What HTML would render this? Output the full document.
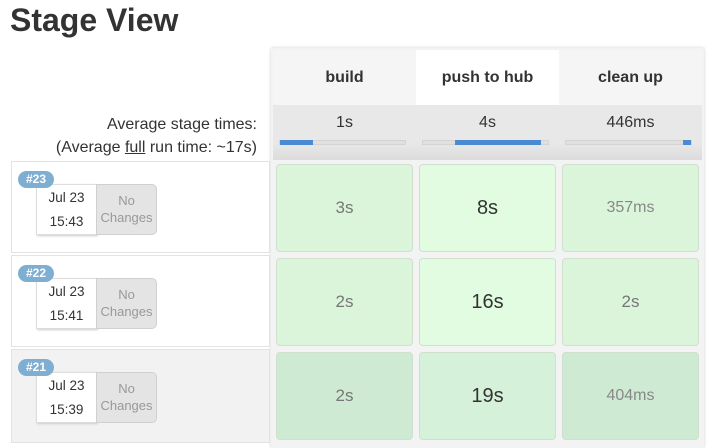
<!DOCTYPE html><html><head><style>
*{margin:0;padding:0;box-sizing:border-box}
body{width:716px;height:443px;background:#fff;font-family:"Liberation Sans",sans-serif;color:#333;position:relative;overflow:hidden}
.a{position:absolute}
h1{position:absolute;left:10px;top:2px;font-size:32px;font-weight:bold;color:#333}
.hd{top:50px;height:55px;width:143px;background:#f5f5f5;text-align:center;line-height:55px;font-weight:bold;font-size:16px}
.av{top:105px;height:55px;width:143px;background:linear-gradient(#e8e8e8 70%,#dcdcdc);text-align:center;font-size:16px;padding-top:9px}
.bar{position:absolute;top:35px;left:6px;right:10px;height:5px;background:#e0e0e0;border:1px solid #d4d4d4}
.bar i{position:absolute;top:-1px;height:5px;background:#4a8ad0}
.c{width:137px;height:88px;border:1px solid #cfe0cf;border-radius:4px;text-align:center;line-height:86px;font-size:17px;color:#777}
.rl{left:11px;width:259px;height:92px;border:1px solid #e3e3e3;background:#fff}
.badge{left:18px;width:36px;height:17px;background:#7eaed1;color:#fff;border-radius:9px;font-size:12px;font-weight:bold;text-align:center;line-height:17px}
.dt{left:36px;width:61px;height:51px;background:#fff;border:1px solid #ddd;box-shadow:1px 1px 2px #ccc;font-size:13.5px;text-align:center;line-height:24px;padding-top:1px}
.nc{left:96px;width:61px;height:51px;background:#e4e4e4;border:1px solid #d0d0d0;border-radius:0 5px 5px 0;color:#999;font-size:13px;text-align:center;line-height:17px;padding-top:7px}
</style></head><body>
<h1>Stage View</h1>
<div class="a" style="left:271px;top:48px;width:433px;height:400px;background:#f3f3f3;box-shadow:0 0 3px #ccc"></div>
<div class="a hd" style="left:273px">build</div>
<div class="a hd" style="left:416px;background:#fff">push to hub</div>
<div class="a hd" style="left:559px">clean up</div>
<div class="a av" style="left:273px">1s<div class="bar"><i style="left:0;width:33px"></i></div></div>
<div class="a av" style="left:416px">4s<div class="bar"><i style="left:32px;width:86px"></i></div></div>
<div class="a av" style="left:559px">446ms<div class="bar"><i style="left:117px;width:8px"></i></div></div>
<div class="a" style="right:459px;top:113px;text-align:right;font-size:16px;line-height:23px;width:270px">Average stage times:<br>(Average <u>full</u> run time: ~17s)</div>

<div class="a rl" style="top:161px"></div>
<div class="a rl" style="top:255px"></div>
<div class="a rl" style="top:349px;background:#f2f2f2;height:94px"></div>

<div class="a dt" style="top:184px">Jul 23<br>15:43</div><div class="a nc" style="top:184px">No<br>Changes</div><div class="a badge" style="top:171px">#23</div>
<div class="a dt" style="top:278px">Jul 23<br>15:41</div><div class="a nc" style="top:278px">No<br>Changes</div><div class="a badge" style="top:265px">#22</div>
<div class="a dt" style="top:372px">Jul 23<br>15:39</div><div class="a nc" style="top:372px">No<br>Changes</div><div class="a badge" style="top:359px">#21</div>

<div class="a c" style="left:276px;top:164px;background:#daf5da">3s</div>
<div class="a c" style="left:419px;top:164px;background:#e1fce1;color:#333;font-size:20px">8s</div>
<div class="a c" style="left:562px;top:164px;background:#daf5da;font-size:16px;color:#888">357ms</div>
<div class="a c" style="left:276px;top:258px;background:#daf5da">2s</div>
<div class="a c" style="left:419px;top:258px;background:#e1fce1;color:#333;font-size:20px">16s</div>
<div class="a c" style="left:562px;top:258px;background:#daf5da">2s</div>
<div class="a c" style="left:276px;top:352px;background:#cfead3">2s</div>
<div class="a c" style="left:419px;top:352px;background:#d6f1d9;color:#333;font-size:20px">19s</div>
<div class="a c" style="left:562px;top:352px;background:#cfead3;font-size:16px;color:#888">404ms</div>
</body></html>
